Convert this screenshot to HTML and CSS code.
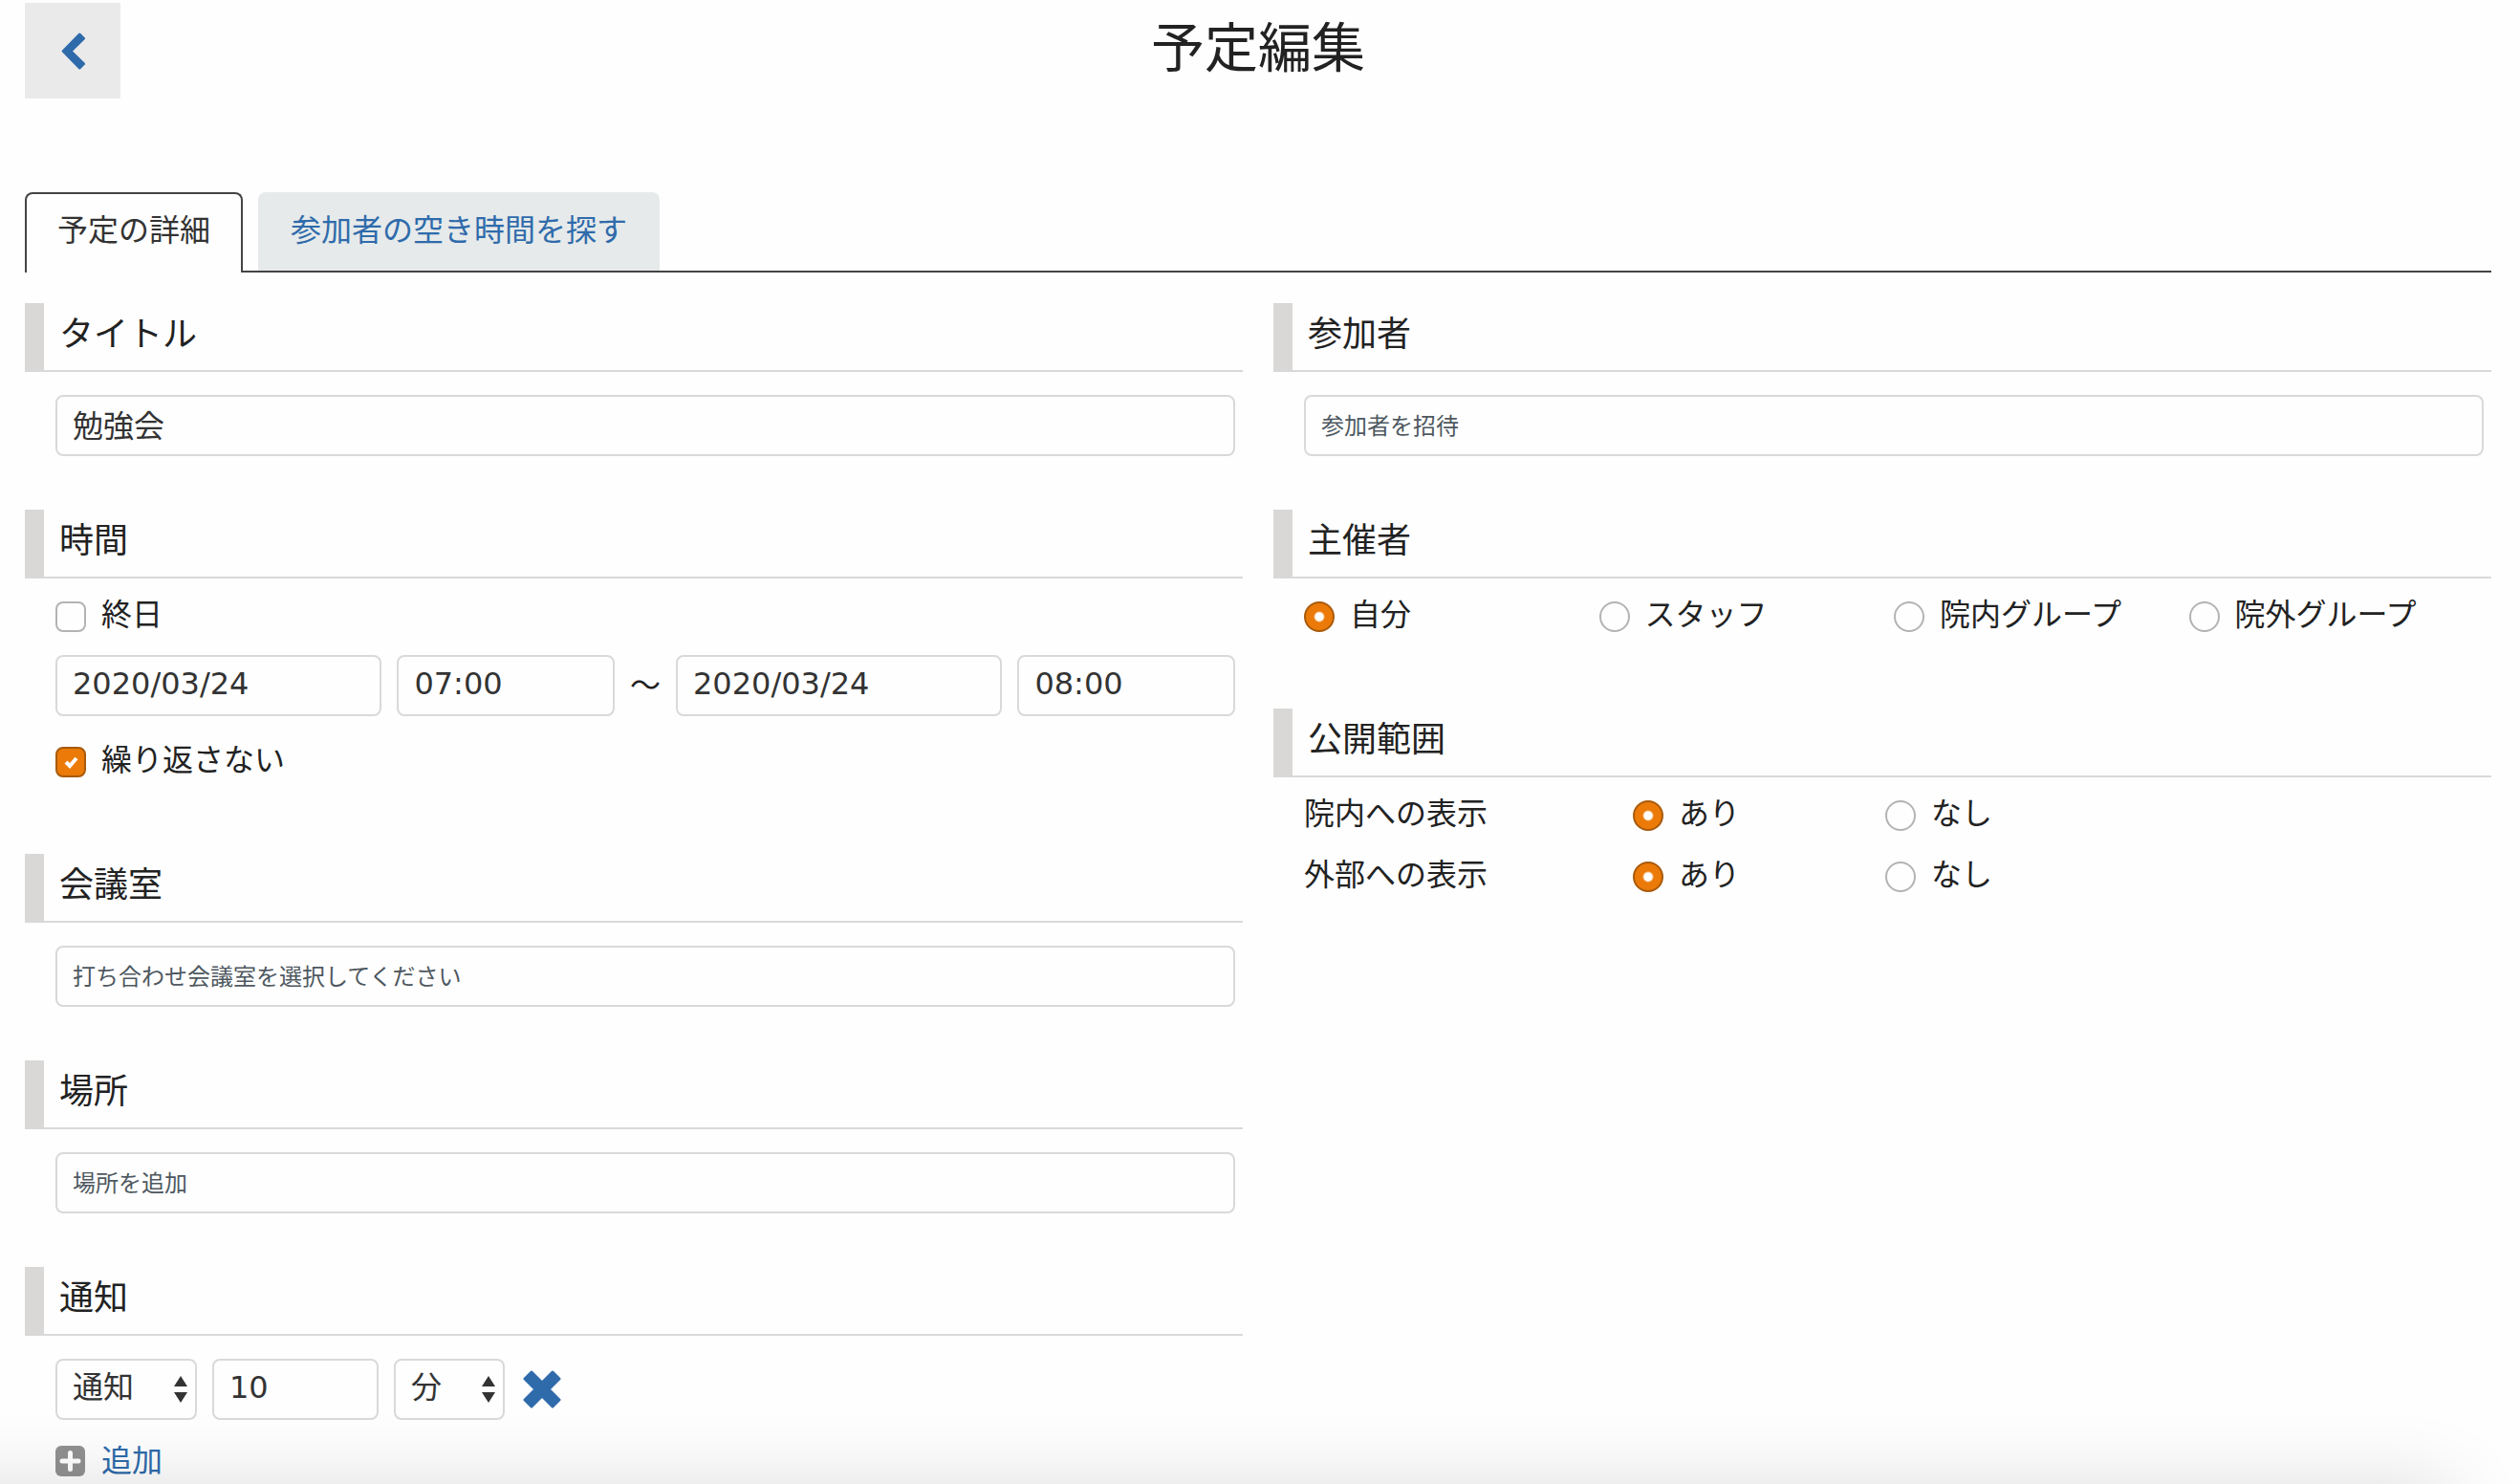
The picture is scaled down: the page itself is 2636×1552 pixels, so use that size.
FILE: index.html
```html
<!DOCTYPE html>
<html lang="ja">
<head>
    <meta charset="UTF-8">
    <meta name="viewport" content="width=device-width, initial-scale=1.0">
    <title>予定編集</title>
    <link rel="stylesheet" href="styles.css">
</head>
<body>
    <header class="header">
        <button type="button" class="back" aria-label="戻る">
            <svg width="25" height="39" viewBox="0 0 25 39"><path d="M2.200 19.500L19.300 2L23.500 6.200L10 19.500L23.500 32.800L19.300 37Z" fill="#2f6bab" stroke="#2f6bab" stroke-width="3" stroke-linejoin="round"/></svg>
        </button>
        <h1>予定編集</h1>
    </header>

    <nav class="tabs">
        <a href="#detail" class="tab active">予定の詳細</a>
        <a href="#free" class="tab">参加者の空き時間を探す</a>
    </nav>

    <form class="columns">
        <div class="column">
            <section>
                <h2><label for="title">タイトル</label></h2>
                <div class="body">
                    <input type="text" class="text" id="title" value="勉強会">
                </div>
            </section>
            <section>
                <h2>時間</h2>
                <div class="body">
                    <label class="check"><input type="checkbox">終日</label>
                    <div class="period">
                        <input type="text" class="text" aria-label="開始日" value="2020/03/24">
                        <input type="text" class="text" aria-label="開始時刻" value="07:00">
                        <span>～</span>
                        <input type="text" class="text" aria-label="終了日" value="2020/03/24">
                        <input type="text" class="text" aria-label="終了時刻" value="08:00">
                    </div>
                    <label class="check"><input type="checkbox" checked>繰り返さない</label>
                </div>
            </section>
            <section>
                <h2><label for="room">会議室</label></h2>
                <div class="body">
                    <input type="text" class="text" id="room" placeholder="打ち合わせ会議室を選択してください">
                </div>
            </section>
            <section>
                <h2><label for="place">場所</label></h2>
                <div class="body">
                    <input type="text" class="text" id="place" placeholder="場所を追加">
                </div>
            </section>
            <section>
                <h2>通知</h2>
                <div class="body">
                    <div class="notice">
                        <select class="text kind" aria-label="通知方法">
                            <option>通知</option>
                            <option>メール</option>
                        </select>
                        <input type="text" class="text amount" aria-label="通知までの時間" value="10">
                        <select class="text unit" aria-label="単位">
                            <option>分</option>
                            <option>時間</option>
                            <option>日</option>
                        </select>
                        <button type="button" class="remove" aria-label="削除">
                            <svg width="40" height="40" viewBox="0 0 40 40"><path d="M2 9L9 2L20 13L31 2L38 9L27 20L38 31L31 38L20 27L9 38L2 31L13 20Z" fill="#2f6bab" stroke="#2f6bab" stroke-width="3" stroke-linejoin="round"/></svg>
                        </button>
                    </div>
                    <a href="#add" class="add">
                        <svg width="32" height="32" viewBox="0 0 32 32"><rect width="31" height="32" rx="6" fill="#919191"/><path d="M15.500 7.500V24.500M7 16H24" stroke="#fff" stroke-width="5" stroke-linecap="round"/></svg>
                        追加
                    </a>
                </div>
            </section>
        </div>

        <div class="column">
            <section>
                <h2><label for="member">参加者</label></h2>
                <div class="body">
                    <input type="text" class="text" id="member" placeholder="参加者を招待">
                </div>
            </section>
            <section>
                <h2>主催者</h2>
                <div class="body owner">
                    <label class="check"><input type="radio" name="owner" checked>自分</label>
                    <label class="check"><input type="radio" name="owner">スタッフ</label>
                    <label class="check"><input type="radio" name="owner">院内グループ</label>
                    <label class="check"><input type="radio" name="owner">院外グループ</label>
                </div>
            </section>
            <section>
                <h2>公開範囲</h2>
                <div class="body scope">
                    <span>院内への表示</span>
                    <label class="check"><input type="radio" name="inside" checked>あり</label>
                    <label class="check"><input type="radio" name="inside">なし</label>
                    <span>外部への表示</span>
                    <label class="check"><input type="radio" name="outside" checked>あり</label>
                    <label class="check"><input type="radio" name="outside">なし</label>
                </div>
            </section>
        </div>
    </form>

    <footer class="footer"></footer>
</body>
</html>
```

FILE: styles.css
```css
* {
    box-sizing: border-box;
}
body {
    margin: 0;
    padding: 3px 30px 0 26px;
    background: #fefefe;
    color: #222;
    font-family: "DejaVu Sans", "Noto Sans CJK JP", sans-serif;
    font-size: 32px;
    line-height: 32px;
}
h1, h2 {
    margin: 0;
    font-weight: normal;
}
a {
    color: #2f6bab;
    text-decoration: none;
}

/* ヘッダー */
.header {
    display: grid;
    grid-template-columns: 100px 1fr 100px;
    height: 100px;
}
.header h1 {
    font-size: 56px;
    line-height: 96px;
    text-align: center;
}
.back {
    display: flex;
    align-items: center;
    justify-content: center;
    padding: 0;
    border: none;
    background: #eaeaea;
    cursor: pointer;
}

/* タブ */
.tabs {
    display: flex;
    gap: 16px;
    margin: 98px 0 32px;
    border-bottom: 2px solid #444;
}
.tab {
    padding: 22px 32px 26px;
    border: 2px solid #e6eaea;
    border-bottom: none;
    border-radius: 8px 8px 0 0;
    background: #e6eaea;
}
.tab.active {
    margin-bottom: -2px;
    border-color: #444;
    background: #fefefe;
    color: #333;
}

/* フォーム */
.columns {
    display: grid;
    grid-template-columns: 1fr 1fr;
    gap: 32px;
    align-items: start;
}
.column {
    display: grid;
    gap: 56px;
}
h2 {
    height: 72px;
    padding-left: 16px;
    border-left: 20px solid #d9d8d7;
    border-bottom: 2px solid #d9d9d9;
    font-size: 36px;
    line-height: 66px;
}
.body {
    padding: 24px 8px 0 32px;
}
.text {
    display: block;
    width: 100%;
    min-width: 0;
    height: 64px;
    margin: 0;
    padding: 0 16px 4px;
    border: 2px solid #d9d9d9;
    border-radius: 8px;
    background: #fefefe;
    color: #333;
    font: inherit;
}
.text::placeholder {
    color: #4e5860;
    font-size: 24px;
}
.check {
    display: flex;
    align-items: flex-start;
    gap: 16px;
    height: 32px;
    margin-bottom: 24px;
    line-height: 28px;
}
.check input {
    appearance: none;
    flex: none;
    width: 32px;
    height: 32px;
    margin: 0;
    border: 2px solid #b3b3b3;
    border-radius: 8px;
    background: #fefefe center no-repeat;
}
.check input[type="radio"] {
    border-radius: 50%;
}
.check input:checked {
    border-color: #a85a0c;
    background-color: #eb7a08;
}
.check input[type="checkbox"]:checked {
    background-image: url("data:image/svg+xml,%3Csvg xmlns='http://www.w3.org/2000/svg' width='16' height='16'%3E%3Cpath d='M3 8L7 12L14 4' fill='none' stroke='white' stroke-width='4'/%3E%3C/svg%3E");
}
.check input[type="radio"]:checked {
    background-image: radial-gradient(circle, #fff 4px, transparent 6px);
}
.period {
    display: grid;
    grid-template-columns: 3fr 2fr auto 3fr 2fr;
    gap: 16px;
    align-items: center;
    margin-bottom: 32px;
}
.notice {
    display: flex;
    gap: 16px;
    margin-bottom: 27px;
}
select.text {
    appearance: none;
    background-image: url("data:image/svg+xml,%3Csvg xmlns='http://www.w3.org/2000/svg' width='16' height='30' fill='%23333'%3E%3Cpath d='M8 1L15 12H1ZM8 29L15 18H1Z'/%3E%3C/svg%3E");
    background-repeat: no-repeat;
    background-position: right 7px center;
}
.kind {
    width: 148px;
}
.amount {
    width: 174px;
}
.unit {
    width: 116px;
}
.remove {
    display: flex;
    align-items: center;
    padding: 0 3px;
    border: none;
    background: none;
    cursor: pointer;
}
.add {
    display: flex;
    align-items: center;
    gap: 16px;
}
.owner {
    display: grid;
    grid-template-columns: repeat(4, 1fr);
}
.scope {
    display: grid;
    grid-template-columns: 344px 264px 1fr;
    row-gap: 8px;
    line-height: 28px;
}

/* 画面下に固定したフッターの影 */
.footer {
    position: fixed;
    top: 100%;
    left: -200px;
    right: 70px;
    height: 100px;
    box-shadow: 0 0 80px rgba(0, 0, 0, 0.13);
}
```
